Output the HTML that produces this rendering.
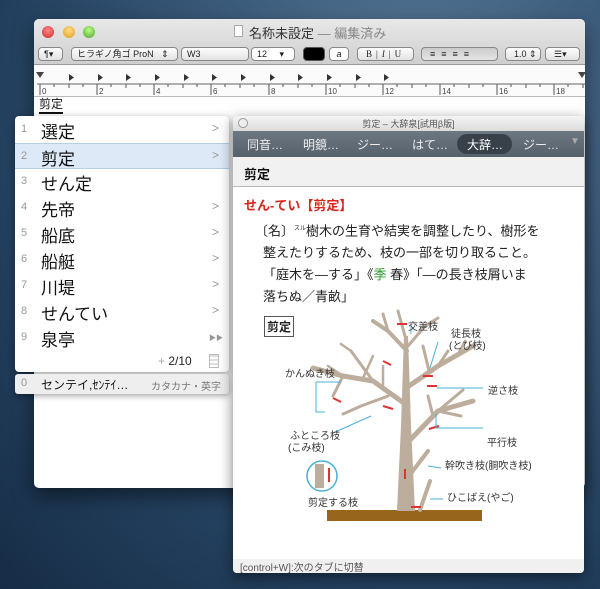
<!DOCTYPE html>
<html><head><meta charset="utf-8"><style>
*{margin:0;padding:0;box-sizing:border-box}
body{width:600px;height:589px;overflow:hidden;position:relative;font-family:"Liberation Sans","Noto Sans CJK JP",sans-serif;background:radial-gradient(ellipse at 70% 20%,#5a7b99 0%,#3c5c7c 35%,#23405e 70%,#172c45 100%)}
.abs{position:absolute}
#win{left:34px;top:19px;width:551px;height:469px;background:#fff;border-radius:5px;box-shadow:0 8px 20px rgba(0,0,0,.5);overflow:hidden}
#tb{left:0;top:0;width:551px;height:46px;background:linear-gradient(#e8e8e8,#cfcfcf);border-bottom:1px solid #999}
.lt{width:12px;height:12px;border-radius:50%;top:7px}
.btn{height:14px;top:28px;border:1px solid #888;border-radius:4px;background:linear-gradient(#fdfdfd,#e2e2e2);font-size:9px;line-height:12px;padding-left:5px;color:#222;white-space:nowrap;overflow:hidden}
#ruler{left:0;top:46px;width:551px;height:32px;background:#fbfbfb;border-bottom:1px solid #bbb}
#cand{left:15px;top:116px;width:214px;height:256px;background:#fff;border-radius:4px;box-shadow:0 2px 8px rgba(0,0,0,.35)}
.row{position:absolute;left:0;width:214px;height:26px}
.row .n{position:absolute;left:6px;top:6px;font-size:11px;color:#999}
.row .t{position:absolute;left:26px;top:1px;font-size:17px;color:#111}
.row .a{position:absolute;left:197px;top:4px;font-size:12px;color:#999}
#c0{left:15px;top:374px;width:214px;height:20px;background:#eee;border-radius:3px;box-shadow:0 2px 6px rgba(0,0,0,.35);font-size:12px}
#dict{left:233px;top:116px;width:351px;height:457px;background:#fff;border-radius:4px;box-shadow:0 4px 14px rgba(0,0,0,.5);overflow:hidden}
</style></head><body>
<div id="win" class="abs">
 <div id="tb" class="abs">
  <div class="abs lt" style="left:8px;background:radial-gradient(circle at 50% 35%,#f88,#d3282a)"></div>
  <div class="abs lt" style="left:29px;background:radial-gradient(circle at 50% 35%,#fd8,#e09a1a)"></div>
  <div class="abs lt" style="left:49px;background:radial-gradient(circle at 50% 35%,#bf8,#4ca12a)"></div>
  <div class="abs" style="left:200px;top:6px;width:9px;height:12px;background:#fff;border:1px solid #aaa"></div>
  <div class="abs" style="left:215px;top:4px;font-size:13px;color:#333">名称未設定 <span style="color:#888">— 編集済み</span></div>
  <div class="abs btn" style="left:4px;width:25px">¶▾</div>
  <div class="abs btn" style="left:37px;width:107px">ヒラギノ角ゴ ProN &nbsp;&nbsp;⇕</div>
  <div class="abs btn" style="left:147px;width:68px">W3</div>
  <div class="abs btn" style="left:217px;width:44px;background:#fff">12 &nbsp;&nbsp;&nbsp;&nbsp;▾</div>
  <div class="abs btn" style="left:269px;width:22px;background:#000;border-color:#555"></div>
  <div class="abs btn" style="left:295px;width:20px;background:#fff;padding:0;text-align:center;font-style:italic">a</div>
  <div class="abs btn" style="left:323px;width:57px;font-family:'Liberation Serif';letter-spacing:4px;padding-left:8px">B|<i>I</i>|U</div>
  <div class="abs btn" style="left:387px;width:77px;background:linear-gradient(#ccc,#e4e4e4);letter-spacing:6px;padding-left:8px">≡≡≡≡</div>
  <div class="abs btn" style="left:471px;width:36px;padding-left:8px">1.0 ⇕</div>
  <div class="abs btn" style="left:511px;width:35px;padding-left:8px">☰▾</div>
 </div>
 <div id="ruler" class="abs">
  <svg width="551" height="32" class="abs" style="left:0;top:0">
   <line x1="3" y1="19" x2="551" y2="19" stroke="#666"/>
   <g fill="#444"><path d="M2 7h8l-4 6z"/><path d="M544 7h8l-4 6z"/></g>
   <g fill="#444" font-size="8" font-family="Liberation Sans">
   <text x="8" y="29">0</text><text x="65" y="29">2</text><text x="122" y="29">4</text><text x="179" y="29">6</text><text x="237" y="29">8</text><text x="294" y="29">10</text><text x="351" y="29">12</text><text x="408" y="29">14</text><text x="465" y="29">16</text><text x="522" y="29">18</text>
   </g>
   <g stroke="#555"><line x1="6" y1="19" x2="6" y2="30"/><line x1="63" y1="19" x2="63" y2="30"/><line x1="120" y1="19" x2="120" y2="30"/><line x1="177" y1="19" x2="177" y2="30"/><line x1="235" y1="19" x2="235" y2="30"/><line x1="292" y1="19" x2="292" y2="30"/><line x1="349" y1="19" x2="349" y2="30"/><line x1="406" y1="19" x2="406" y2="30"/><line x1="463" y1="19" x2="463" y2="30"/><line x1="520" y1="19" x2="520" y2="30"/>
   <line x1="20" y1="19" x2="20" y2="22"/><line x1="35" y1="19" x2="35" y2="23"/><line x1="49" y1="19" x2="49" y2="22"/><line x1="77" y1="19" x2="77" y2="22"/><line x1="92" y1="19" x2="92" y2="23"/><line x1="106" y1="19" x2="106" y2="22"/><line x1="134" y1="19" x2="134" y2="22"/><line x1="149" y1="19" x2="149" y2="23"/><line x1="163" y1="19" x2="163" y2="22"/><line x1="191" y1="19" x2="191" y2="22"/><line x1="206" y1="19" x2="206" y2="23"/><line x1="220" y1="19" x2="220" y2="22"/><line x1="249" y1="19" x2="249" y2="22"/><line x1="264" y1="19" x2="264" y2="23"/><line x1="278" y1="19" x2="278" y2="22"/><line x1="306" y1="19" x2="306" y2="22"/><line x1="321" y1="19" x2="321" y2="23"/><line x1="335" y1="19" x2="335" y2="22"/><line x1="363" y1="19" x2="363" y2="22"/><line x1="378" y1="19" x2="378" y2="23"/><line x1="392" y1="19" x2="392" y2="22"/><line x1="420" y1="19" x2="420" y2="22"/><line x1="435" y1="19" x2="435" y2="23"/><line x1="449" y1="19" x2="449" y2="22"/><line x1="477" y1="19" x2="477" y2="22"/><line x1="492" y1="19" x2="492" y2="23"/><line x1="506" y1="19" x2="506" y2="22"/><line x1="534" y1="19" x2="534" y2="22"/><line x1="549" y1="19" x2="549" y2="23"/></g>
   <g fill="#333"><path d="M35 9v7l5-3.5z"/><path d="M64 9v7l5-3.5z"/><path d="M92 9v7l5-3.5z"/><path d="M121 9v7l5-3.5z"/><path d="M150 9v7l5-3.5z"/><path d="M178 9v7l5-3.5z"/><path d="M207 9v7l5-3.5z"/><path d="M236 9v7l5-3.5z"/><path d="M264 9v7l5-3.5z"/><path d="M293 9v7l5-3.5z"/><path d="M322 9v7l5-3.5z"/><path d="M350 9v7l5-3.5z"/></g>
  </svg>
 </div>
 <div class="abs" style="left:5px;top:78px;font-size:12px;color:#111;border-bottom:2px solid #111;line-height:15px">剪定</div>
</div>

<div id="cand" class="abs">
 <div class="row" style="top:1px"><span class="n">1</span><span class="t">選定</span><span class="a">&gt;</span></div>
 <div class="row" style="top:27px;background:#dde9f7;border-top:1px solid #b8cde6;border-bottom:1px solid #b8cde6"><span class="n">2</span><span class="t">剪定</span><span class="a">&gt;</span></div>
 <div class="row" style="top:53px"><span class="n">3</span><span class="t">せん定</span></div>
 <div class="row" style="top:79px"><span class="n">4</span><span class="t">先帝</span><span class="a">&gt;</span></div>
 <div class="row" style="top:105px"><span class="n">5</span><span class="t">船底</span><span class="a">&gt;</span></div>
 <div class="row" style="top:131px"><span class="n">6</span><span class="t">船艇</span><span class="a">&gt;</span></div>
 <div class="row" style="top:157px"><span class="n">7</span><span class="t">川堤</span><span class="a">&gt;</span></div>
 <div class="row" style="top:183px"><span class="n">8</span><span class="t">せんてい</span><span class="a">&gt;</span></div>
 <div class="row" style="top:209px"><span class="n">9</span><span class="t">泉亭</span><span class="a" style="font-size:7px;top:8px;left:194px">▶▶</span></div>
 <div class="abs" style="left:143px;top:238px;font-size:12px;color:#222"><span style="color:#aaa">+</span> 2/10</div>
 <div class="abs" style="left:194px;top:238px;width:10px;height:14px;border:1px solid #bbb;background:repeating-linear-gradient(#ddd 0 2px,#fff 2px 4px)"></div>
</div>
<div id="c0" class="abs"><span class="abs" style="left:6px;top:3px;color:#999;font-size:11px">0</span><span class="abs" style="left:26px;top:2px;color:#111">センテイ,ｾﾝﾃｲ…</span><span class="abs" style="left:136px;top:4px;color:#777;font-size:10px">カタカナ・英字</span></div>

<div id="dict" class="abs">
 <div class="abs" style="left:0;top:0;width:351px;height:15px;background:linear-gradient(#f4f4f4,#dcdcdc)">
  <div class="abs" style="left:5px;top:2px;width:10px;height:10px;border-radius:50%;border:1px solid #999;background:#eee"></div>
  <div class="abs" style="left:0;width:351px;text-align:center;top:1px;font-size:9px;color:#555">剪定 – 大辞泉[試用β版]</div>
 </div>
 <div class="abs" style="left:0;top:15px;width:351px;height:26px;background:linear-gradient(#6c7782,#56616c);color:#eee;font-size:12px">
  <span class="abs" style="left:14px;top:5px">同音…</span><span class="abs" style="left:70px;top:5px">明鏡…</span><span class="abs" style="left:124px;top:5px">ジー…</span><span class="abs" style="left:179px;top:5px">はて…</span>
  <span class="abs" style="left:224px;top:3px;width:55px;height:20px;border-radius:10px;background:#38414a"></span><span class="abs" style="left:234px;top:5px;color:#fff">大辞…</span>
  <span class="abs" style="left:290px;top:5px">ジー…</span><span class="abs" style="left:337px;top:5px;font-size:10px;color:#aaa">▼</span>
 </div>
 <div class="abs" style="left:0;top:41px;width:351px;height:30px;background:#f1f1f1;border-bottom:1px solid #bbb;font-size:13px;font-weight:bold;padding:7px 0 0 11px;color:#111">剪定</div>
 <div class="abs" style="left:11px;top:79px;font-size:13px;font-weight:bold;color:#d8251c">せん‐てい【剪定】</div>
 <div class="abs" style="left:22px;top:102px;font-size:13px;line-height:22px;color:#222;white-space:nowrap">〔名〕<sup style="font-size:6px">スル</sup>樹木の生育や結実を調整したり、樹形を<br><span style="padding-left:8px">整えたりするため、枝の一部を切り取ること。</span><br><span style="padding-left:8px">「庭木を―する」《<span style="color:#2a9a2a">季</span> 春》「―の長き枝屑いま</span><br><span style="padding-left:8px">落ちぬ／青畝」</span></div>
 <div class="abs" style="left:31px;top:200px;border:1px solid #555;font-size:12px;font-weight:bold;padding:1px 2px;color:#222">剪定</div>
 <svg class="abs" style="left:0;top:190px" width="351" height="230" font-family="Liberation Sans,Noto Sans CJK JP,sans-serif" font-size="10" fill="#333">
  <rect x="94" y="204" width="155" height="11" fill="#98651c"/>
  <path d="M164 205 L168 120 L171 30 L175 30 L178 120 L182 205 Z" fill="#bcad9c"/>
  <g stroke="#bcad9c" stroke-linecap="round" fill="none">
   <path d="M175 100 L140 75 L110 70 L80 62" stroke-width="5"/>
   <path d="M140 75 L118 45" stroke-width="3"/>
   <path d="M118 45 L108 38" stroke-width="2.5"/>
   <path d="M110 70 L95 60" stroke-width="2.5"/>
   <path d="M110 70 L100 90" stroke-width="3"/>
   <path d="M130 72 L140 50" stroke-width="2.5"/>
   <path d="M150 82 L150 60" stroke-width="2.5"/>
   <path d="M155 90 L128 100 L110 108" stroke-width="3"/>
   <path d="M176 80 L205 60 L240 40" stroke-width="5"/>
   <path d="M205 60 L215 45" stroke-width="3"/>
   <path d="M224 50 L232 35" stroke-width="2.5"/>
   <path d="M196 65 L190 40" stroke-width="3"/>
   <path d="M176 135 L205 105 L240 95" stroke-width="5"/>
   <path d="M205 105 L230 84" stroke-width="3"/>
   <path d="M205 105 L228 110" stroke-width="3"/>
   <path d="M195 90 L200 110" stroke-width="3"/>
   <path d="M174 45 L155 25 L140 15" stroke-width="4"/>
   <path d="M155 25 L150 8" stroke-width="3"/>
   <path d="M175 40 L192 20 L205 12" stroke-width="3"/>
   <path d="M172 30 L165 5" stroke-width="3"/>
   <path d="M176 170 L195 145" stroke-width="4"/>
   <path d="M187 204 L197 175" stroke-width="4"/>
  </g>
  <g stroke="#d33" stroke-width="2"><path d="M164 18h10"/><path d="M150 55l8 4"/><path d="M190 70h10"/><path d="M194 80h10"/><path d="M100 92l8 4"/><path d="M150 100l10 3"/><path d="M196 123l10-3"/><path d="M172 163v10"/><path d="M178 201h10"/></g>
  <circle cx="89" cy="170" r="15" fill="#fff" stroke="#4ab0d9" stroke-width="1.5"/>
  <rect x="82" y="158" width="9" height="24" fill="#bcad9c"/>
  <path d="M96 162v14" stroke="#d33" stroke-width="2"/>
  <g stroke="#4ab0d9" fill="none"><path d="M178 28 L178 18"/><path d="M205 36 L197 62"/><path d="M204 82 H250"/><path d="M203 108 V122 H250"/><path d="M195 160 L208 162"/><path d="M197 193 H210"/><path d="M83 76 V106 H92"/><path d="M83 76 H108"/><path d="M100 127 L138 110"/></g>
  <text x="175" y="24">交差枝</text><text x="218" y="31">徒長枝</text><text x="216" y="43">(とび枝)</text>
  <text x="52" y="71">かんぬき枝</text><text x="255" y="88">逆さ枝</text>
  <text x="57" y="133">ふところ枝</text><text x="55" y="145">(こみ枝)</text>
  <text x="254" y="140">平行枝</text><text x="212" y="163">幹吹き枝(胴吹き枝)</text>
  <text x="214" y="195">ひこばえ(やご)</text><text x="75" y="200">剪定する枝</text>
 </svg>
 <div class="abs" style="left:0;top:443px;width:351px;height:14px;background:#f0f0f0;font-size:10px;color:#555;padding-left:7px">[control+W]:次のタブに切替</div>
</div>
</body></html>
